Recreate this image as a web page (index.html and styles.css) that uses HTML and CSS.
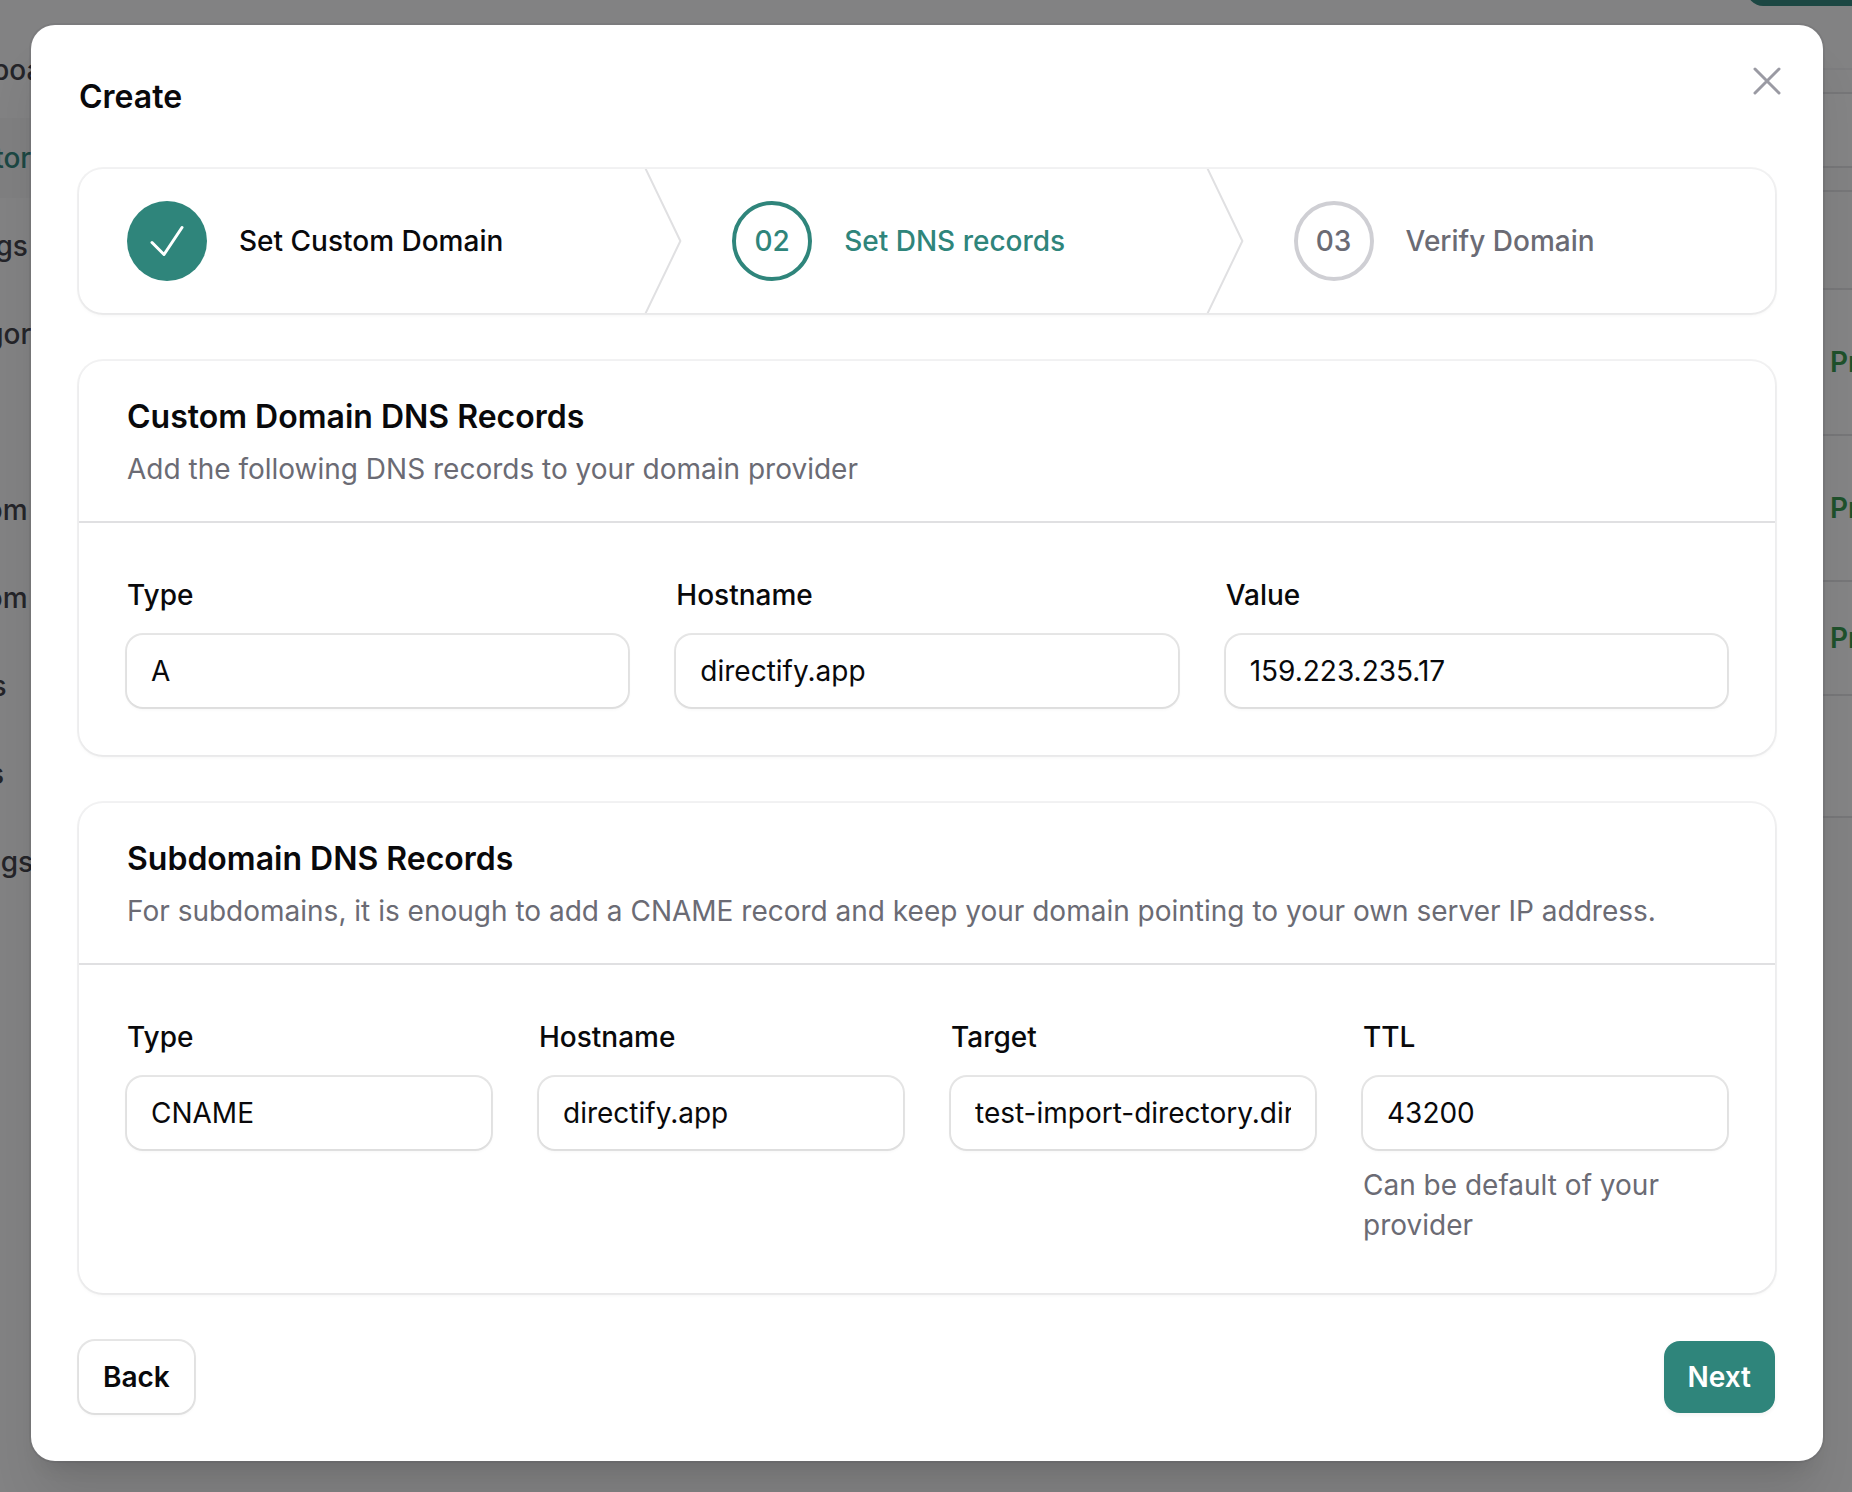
FILE: index.html
```html
<!DOCTYPE html>
<html lang="en">
<head>
<meta charset="utf-8">
<title>Create</title>
<link rel="stylesheet" href="styles.css">
</head>
<body>
<div class="app">
  <nav class="sidebar">
    <a class="nav-item">Dashboard</a>
    <a class="nav-item active">Directories</a>
    <a class="nav-item">Listings</a>
    <a class="nav-item">Categories</a>
    <span class="nav-gap"></span>
    <a class="nav-item">Custom</a>
    <a class="nav-item">Custom</a>
    <a class="nav-item">Pages</a>
    <a class="nav-item nav-users">Users</a>
    <a class="nav-item">Settings</a>
  </nav>
  <main class="page">
    <div class="page-action"></div>
    <div class="table">
      <div class="row row-tabs"></div>
      <div class="row row-search"></div>
      <div class="row row-gap"></div>
      <div class="row row-head"></div>
      <div class="row row-tall"><span>Pr</span></div>
      <div class="row row-tall"><span>Pr</span></div>
      <div class="row row-short"><span>Pr</span></div>
      <div class="row row-foot"></div>
    </div>
  </main>
</div>

<div class="overlay">
  <section class="modal" role="dialog" aria-label="Create">
    <header class="modal-header">
      <h2 class="modal-title">Create</h2>
      <svg class="close" viewBox="0 0 24 24" fill="none" stroke="currentColor" stroke-width="1.5" stroke-linecap="round" stroke-linejoin="round"><path d="M6 18 18 6M6 6l12 12"/></svg>
    </header>
    <div class="modal-body">
      <ol class="card steps">
        <li class="step done">
          <span class="step-badge"><svg viewBox="0 0 24 24" fill="none" stroke="currentColor" stroke-width="1.5" stroke-linecap="round" stroke-linejoin="round"><path d="m4.5 12.75 6 6 9-13.5"/></svg></span>
          <span class="step-label">Set Custom Domain</span>
          <svg class="separator" viewBox="0 0 22 80" preserveAspectRatio="none" fill="none"><path d="M0 -2L20 40L0 82" stroke="currentColor" stroke-linejoin="round" vector-effect="non-scaling-stroke"/></svg>
        </li>
        <li class="step current">
          <span class="step-badge">02</span>
          <span class="step-label">Set DNS records</span>
          <svg class="separator" viewBox="0 0 22 80" preserveAspectRatio="none" fill="none"><path d="M0 -2L20 40L0 82" stroke="currentColor" stroke-linejoin="round" vector-effect="non-scaling-stroke"/></svg>
        </li>
        <li class="step">
          <span class="step-badge">03</span>
          <span class="step-label">Verify Domain</span>
        </li>
      </ol>

      <section class="card">
        <header class="card-header">
          <h3 class="card-title">Custom Domain DNS Records</h3>
          <p class="card-text">Add the following DNS records to your domain provider</p>
        </header>
        <div class="fields three">
          <div class="field"><span class="label">Type</span><div class="value">A</div></div>
          <div class="field"><span class="label">Hostname</span><div class="value">directify.app</div></div>
          <div class="field"><span class="label">Value</span><div class="value">159.223.235.17</div></div>
        </div>
      </section>

      <section class="card">
        <header class="card-header">
          <h3 class="card-title">Subdomain DNS Records</h3>
          <p class="card-text">For subdomains, it is enough to add a CNAME record and keep your domain pointing to your own server IP address.</p>
        </header>
        <div class="fields four">
          <div class="field"><span class="label">Type</span><div class="value">CNAME</div></div>
          <div class="field"><span class="label">Hostname</span><div class="value">directify.app</div></div>
          <div class="field"><span class="label">Target</span><div class="value"><span class="clip">test-import-directory.dire</span></div></div>
          <div class="field"><span class="label">TTL</span><div class="value">43200</div><p class="hint">Can be default of your provider</p></div>
        </div>
      </section>

      <div class="actions">
        <button class="btn btn-outline">Back</button>
        <button class="btn btn-primary">Next</button>
      </div>
    </div>
  </section>
</div>
</body>
</html>
```
FILE: styles.css
```css
* { box-sizing: border-box; margin: 0; padding: 0; }

body {
  height: 1492px;
  overflow: hidden;
  background: #fafafa;
  color: #09090b;
  font: 400 28px/40px Inter, "Liberation Sans", sans-serif;
}

/* Page behind the dialog */
.app { display: flex; justify-content: space-between; height: 1492px; }
.sidebar { display: flex; flex-direction: column; gap: 8px; padding-top: 30px; width: 60px; overflow: hidden; }
.nav-item { height: 80px; padding: 20px 0; text-indent: -76px; font-weight: 500; color: #3f3f46; white-space: nowrap; }
.nav-item.active { background: #f4f4f5; color: #2f857b; }
.nav-item.nav-users { text-indent: -74px; }
.nav-gap { height: 80px; }

.page { width: 104px; }
.page-action { width: 150px; height: 40px; margin: -34px 0 62px -1px; background: #2f857b; border-radius: 16px; }
.table { border-top: 2px solid #f1f1f2; }
.row { border-bottom: 2px solid #e2e2e4; background: #fff; padding-left: 82px; display: flex; align-items: center; }
.row span { font-weight: 600; color: #35994a; }
.row-tabs { height: 24px; background: #fafafa; }
.row-search { height: 74px; }
.row-gap { height: 24px; background: #fafafa; }
.row-head { height: 98px; background: #fafafa; }
.row-tall { height: 146px; }
.row-short { height: 114px; }
.row-foot { height: 122px; }

/* Dialog */
.overlay { position: absolute; inset: 0; padding: 25px 29px 31px 31px; background: rgba(9, 9, 11, .5); }
.modal {
  height: 1436px;
  border-radius: 24px;
  background: #fff;
  box-shadow: 0 0 0 2px rgba(9, 9, 11, .05), 0 40px 50px -10px rgba(0, 0, 0, .1), 0 16px 20px -12px rgba(0, 0, 0, .1);
}
.modal-header { display: flex; justify-content: space-between; padding: 48px 32px 0 48px; height: 96px; }
.modal-title { font-size: 32px; line-height: 48px; font-weight: 600; }
.close { width: 48px; height: 48px; margin-top: -16px; color: #9a9aa3; }
.modal-body { display: flex; flex-direction: column; gap: 48px; padding: 48px; }

.card { border-radius: 24px; background: #fff; box-shadow: 0 0 0 2px rgba(9, 9, 11, .05), 0 2px 4px rgba(0, 0, 0, .05); }

.steps { display: grid; grid-template-columns: 605.2px 561.4px 1fr; height: 144px; list-style: none; }
.step { position: relative; display: flex; align-items: center; gap: 32px; padding: 0 48px; font-weight: 500; color: #6b6b74; }
.step-badge { display: flex; align-items: center; justify-content: center; width: 80px; height: 80px; border: 4px solid #cfcfd4; border-radius: 50%; }
.step-badge svg { width: 48px; height: 48px; }
.step-label { white-space: nowrap; }
.done { color: #09090b; }
.done .step-badge { border: 0; background: #2f857b; color: #fff; }
.current { color: #2f857b; }
.current .step-badge { border-color: #2f857b; }
.separator { position: absolute; top: 0; right: 0; width: 40px; height: 100%; color: #e0e0e2; stroke-width: 2px; }

.card-header { padding: 32px 48px; }
.card-title { font-size: 32px; line-height: 48px; font-weight: 600; }
.card-text { margin-top: 8px; color: #6b6b74; white-space: nowrap; }

.fields { display: grid; gap: 48px; padding: 48px; border-top: 2px solid #e0e0e2; }
.three { grid-template-columns: repeat(3, 1fr); }
.four { grid-template-columns: repeat(4, minmax(0, 1fr)); }
.label { display: block; margin-bottom: 16px; line-height: 48px; font-weight: 500; }
.value { height: 72px; padding: 12px 24px; border-radius: 16px; line-height: 48px; white-space: nowrap; box-shadow: 0 0 0 2px rgba(9, 9, 11, .1), 0 2px 4px rgba(0, 0, 0, .05); }
.clip { display: block; overflow: hidden; }
.hint { margin-top: 16px; color: #6b6b74; }

.actions { display: flex; justify-content: space-between; }
.btn { height: 72px; padding: 0 24px; border: 0; border-radius: 16px; background: #fff; font: 600 28px/40px Inter, "Liberation Sans", sans-serif; color: #09090b; }
.btn-outline { box-shadow: 0 0 0 2px rgba(9, 9, 11, .1), 0 2px 4px rgba(0, 0, 0, .05); }
.btn-primary { background: #2f857b; color: #fff; box-shadow: 0 2px 4px rgba(0, 0, 0, .05); }
```
